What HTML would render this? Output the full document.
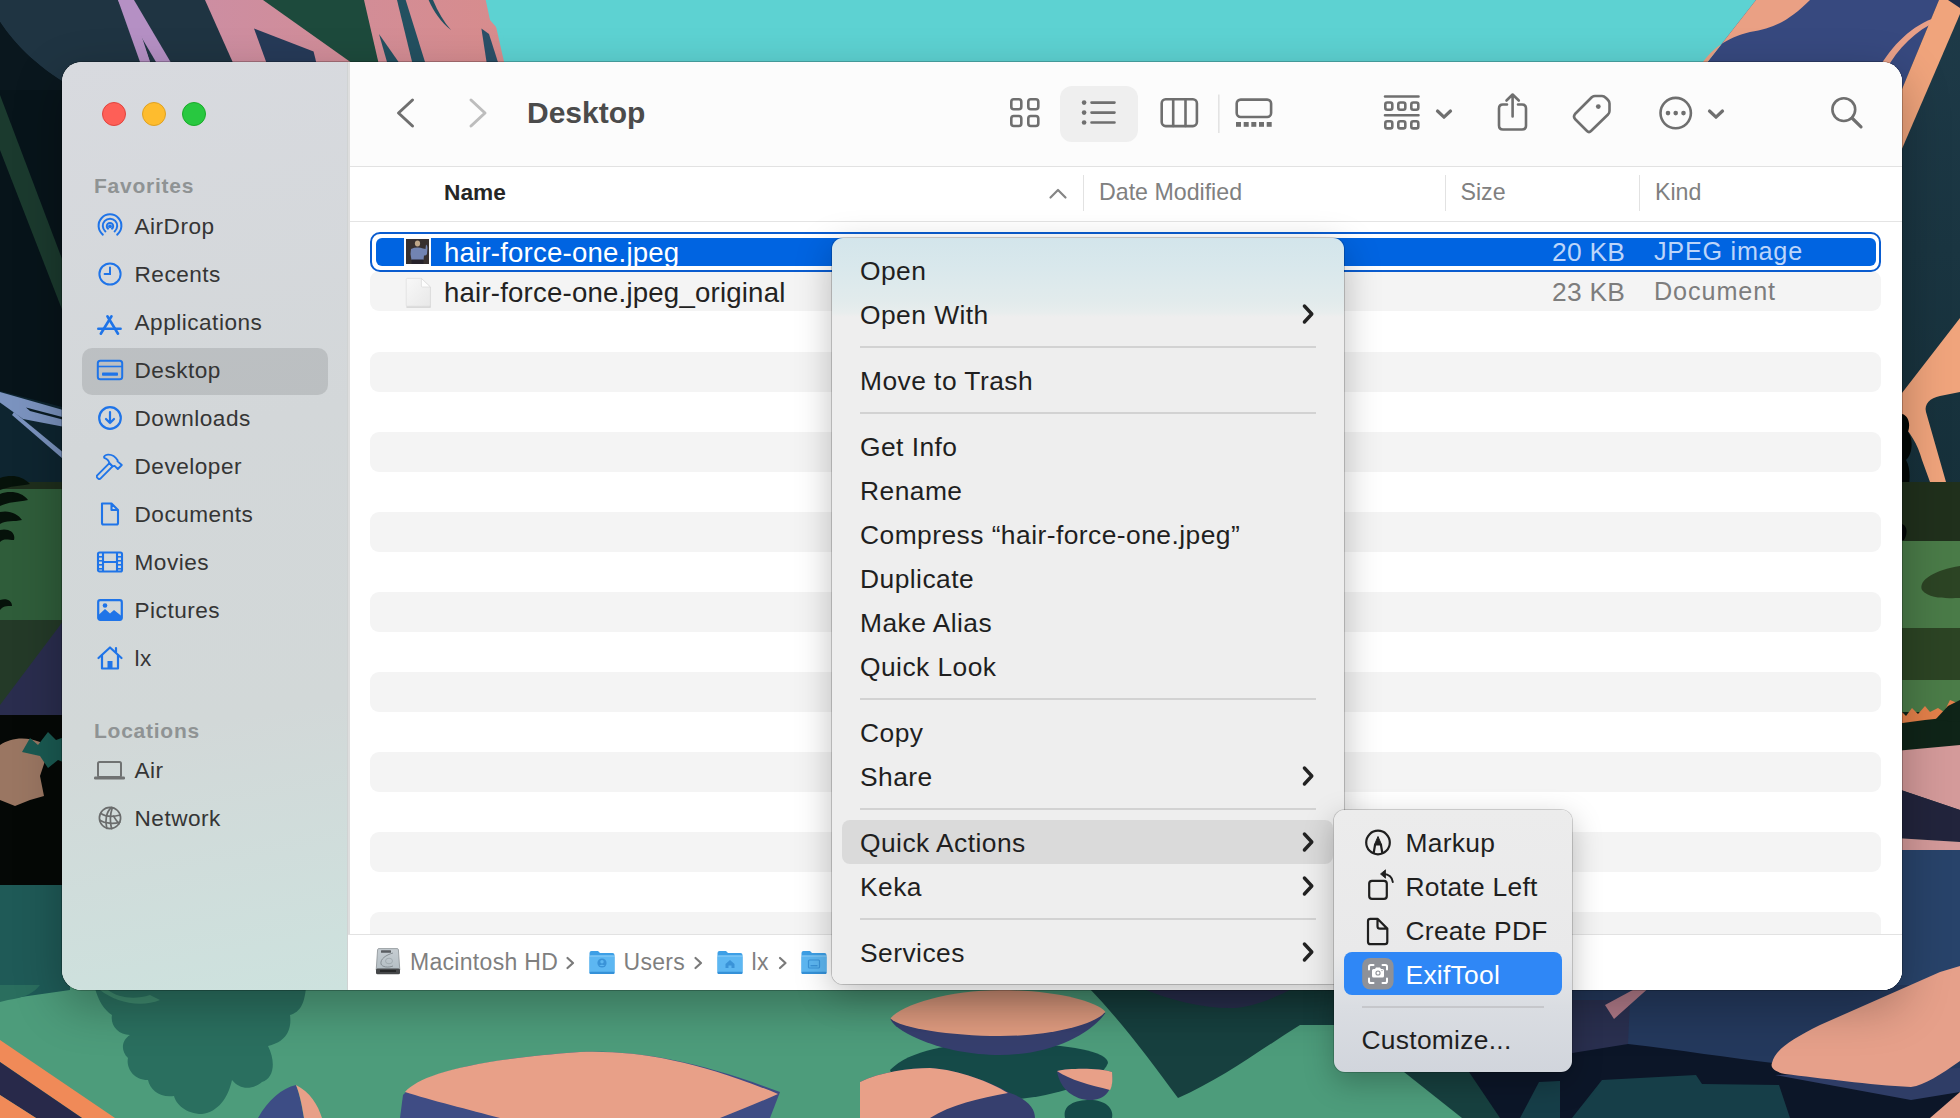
<!DOCTYPE html>
<html><head><meta charset="utf-8">
<style>
*{margin:0;padding:0;box-sizing:border-box}
html,body{width:1960px;height:1118px;overflow:hidden;background:#1b3a40}
body{position:relative;font-family:"Liberation Sans",sans-serif;}
#wall{position:absolute;left:0;top:0;width:1960px;height:1118px}
.abs{position:absolute}
#win{position:absolute;left:62px;top:62px;width:1840px;height:928px;border-radius:20px;overflow:hidden;background:#fff;box-shadow:0 0 0 1px rgba(0,0,0,0.22),0 16px 48px rgba(0,0,0,0.28)}
#side{position:absolute;left:0;top:0;width:286px;height:928px;background:linear-gradient(170deg,#d8dadf 0%,#d3d7d9 40%,#d2d8d8 70%,#cde2de 100%);border-right:1px solid #d0d3d3}
.dot{position:absolute;top:40px;width:24px;height:24px;border-radius:50%}
.sh{position:absolute;left:94px;font-size:21px;font-weight:700;color:#8f9394;white-space:nowrap;letter-spacing:0.75px}
.st{position:absolute;left:134.5px;font-size:22.6px;color:#353535;white-space:nowrap;letter-spacing:0.5px}
.si{position:absolute;left:20px;width:246px;height:47px;border-radius:10px}
.si span{position:absolute;left:53px;top:10px;font-size:22.6px;color:#353535;white-space:nowrap}
.si svg{position:absolute;left:14px;top:11px}
#main{position:absolute;left:286px;top:0;width:1554px;height:928px;background:#fff}
#tb{position:absolute;left:0;top:0;width:1554px;height:105px;background:#fcfcfc;border-bottom:1px solid #e2e2e2}
.ic{position:absolute}
#hdr{position:absolute;left:0;top:105px;width:1554px;height:55px;background:#fff;border-bottom:1px solid #e4e4e4}
.hd{position:absolute;top:15px;font-size:23.2px;color:#808080;white-space:nowrap}
.row{position:absolute;left:22px;width:1511px;height:40px;border-radius:9px}
.gr{background:#f4f4f4}
.fn{position:absolute;font-size:27.6px;white-space:nowrap;letter-spacing:0.2px}
#path{position:absolute;left:0;top:872px;width:1554px;height:56px;background:#fff;border-top:1px solid #e2e2e2}
.pt{position:absolute;font-size:23px;color:#7f7f7f;white-space:nowrap;letter-spacing:0.3px}
#menu{position:absolute;left:832px;top:238px;width:512px;height:746px;border-radius:11px;background:linear-gradient(180deg,#d3e5eb 0%,#d9e8ec 4%,#e2ebec 8.5%,#e8eded 10%,#eeeeee 10.6%,#eeeeee 100%);box-shadow:0 0 0 1px rgba(0,0,0,0.18),0 10px 36px rgba(0,0,0,0.25)}
.mi{position:absolute;left:860px;font-size:26.4px;color:#1f1f1f;white-space:nowrap;letter-spacing:0.45px}
.sep{position:absolute;left:860px;width:456px;height:2px;background:#d2d2d2}
.chev{position:absolute;left:468px}
#sub{position:absolute;left:1334px;top:810px;width:238px;height:262px;border-radius:11px;background:linear-gradient(180deg,#ececec 0%,#e9e9ea 55%,#dadde2 75%,#d1d5dc 100%);box-shadow:0 0 0 1px rgba(0,0,0,0.16),0 10px 30px rgba(0,0,0,0.25)}
.smi{position:absolute;left:72px;font-size:26.4px;color:#1f1f1f;white-space:nowrap}
</style></head><body>
<svg id="wall" viewBox="0 0 1960 1118">
 <rect x="0" y="0" width="1960" height="1118" fill="#1b3a40"/>
 <!-- top strip -->
 <defs>
  <linearGradient id="pk" x1="0" y1="0" x2="1" y2="0"><stop offset="0" stop-color="#c58fb0"/><stop offset="1" stop-color="#d88c8c"/></linearGradient>
 </defs>
 <rect x="0" y="0" width="1960" height="110" fill="#5dd2d2"/>
 <polygon points="0,0 490,0 515,110 0,110" fill="url(#pk)"/>
 <rect x="0" y="0" width="205" height="110" fill="#1f3442"/>
 <polygon points="205,0 254,110 205,110" fill="#1f3442"/>
 <path d="M0,22 C15,45 40,70 80,92 L0,110 Z" fill="#0a171e"/>
 <path d="M0,22 C15,45 40,70 80,92 L85,110 L0,110 Z" fill="#0a171e"/>
 <polygon points="118,0 134,0 180,78 156,78" fill="#b590c4"/>
 <polygon points="140.6,35.8 156,62 150,62" fill="#1f3442"/>
 <polygon points="118,0 130,0 150,62 140,62" fill="#b590c4"/>
 <polygon points="254,28.6 313.6,51.4 320,78 272,78" fill="#263a58"/>
 <polygon points="263,0 364,0 382,78 373,78" fill="#1d4a3c"/>
 <polygon points="379,34 387,62 398.6,62" fill="#235060"/>
 <polygon points="397,0 405.7,0 430,78 416,78" fill="#235060"/>
 <path d="M428.6,0 L433,0 C438,12 444,22 451,30 C441,22 434,12 428.6,0 Z" fill="#235060"/>
 <polygon points="481.4,28.6 489,34 503,78 489,78" fill="#2a5068"/>
 <path d="M485.7,0 L490,20 L503,35 L512,78 L1960,78 L1960,0 Z" fill="#5dd2d2"/>
 <!-- top right -->
 <polygon points="1756,0 1960,0 1960,110 1670,110" fill="#37497f"/>
 <path d="M1756,0 L1810,0 C1790,20 1775,28 1750,32 C1725,38 1712,50 1703,62 L1670,110 Z" fill="#eaa084"/>
 
  <!-- left strip -->
 <rect x="0" y="90" width="70" height="300" fill="#07141a"/>
 <polygon points="0,95 0,150 70,330 70,280" fill="#1b3a2e"/>
 <polygon points="0,385 70,385 70,490 0,490" fill="#0e2530"/><polygon points="0,385 70,385 70,409 0,391" fill="#07141a"/>
 <polygon points="0,392 70,412 70,428 23,419 0,402.6" fill="#7b93bf"/>
 <polygon points="26,407.5 70,419 70,421.5 30,411" fill="#0a1c24"/>
 <polygon points="14,412 70,458 70,465 12,415" fill="#7b93bf"/>
 <rect x="0" y="482" width="70" height="8" fill="#1e2e1c"/>
 <rect x="0" y="489" width="70" height="133" fill="#2f5d3a"/>
 <path d="M0,478 C12,474 22,476 30,484 C20,486 10,486 0,490 Z M0,494 C10,490 22,492 28,500 C18,502 8,502 0,506 Z M0,512 C10,510 18,514 22,520 C14,522 6,520 0,524 Z M0,530 C8,528 16,532 14,540 C8,540 4,538 0,542 Z M0,600 C6,598 12,600 12,606 C6,606 3,606 0,610 Z" fill="#06120a"/>
 <polygon points="0,622 70,622 70,715 0,715" fill="#2a2d4e"/>
 <polygon points="0,620 64,620 0,705" fill="#243a28"/>
 <rect x="0" y="715" width="70" height="172" fill="#050806"/>
 <path d="M0,745 C10,738 25,736 40,742 L46,758 L40,776 L44,796 L30,800 L15,806 L0,800 Z" fill="#9a7662"/>
 <path d="M22,752 L30,738 L38,745 L48,732 L56,740 L70,735 L70,765 L58,760 L48,768 L40,756 Z" fill="#1a5a52"/>
 <rect x="0" y="885" width="70" height="125" fill="#1f5a57"/>
 <!-- right strip -->
 <defs><linearGradient id="dt" x1="0" y1="0" x2="0" y2="1"><stop offset="0" stop-color="#1e3a48"/><stop offset="1" stop-color="#16303a"/></linearGradient></defs>
 <rect x="1895" y="0" width="65" height="500" fill="url(#dt)"/>
 <polygon points="1895,0 1939,0 1895,106" fill="#37497f"/>
 <path d="M1878,70 C1892,45 1912,25 1937,17 L1938,21 C1916,30 1898,48 1886,70 Z" fill="#e8a088"/>
 <polygon points="1939,0 1966,0 1895,165 1895,106" fill="#f0a47c"/>
 <polygon points="1948,0 1960,0 1960,8" fill="#1f2c4a"/>
 <path d="M1960,318 L1895,402 L1895,418 C1910,430 1918,445 1922,460 L1930,482 L1946,482 L1926,412 C1924,404 1930,398 1940,396 L1960,392 Z" fill="#f0a47c"/>
 <path d="M1895,415 C1905,410 1912,420 1908,432 C1914,440 1912,455 1906,460 C1912,470 1910,490 1904,500 C1910,510 1906,520 1895,525 Z" fill="#030806"/>
 <rect x="1895" y="482" width="65" height="60" fill="#20301c"/>
 <path d="M1895,525 C1905,520 1910,530 1904,540 L1895,542 Z" fill="#030806"/>
 <rect x="1895" y="541" width="65" height="87" fill="#4a7b48"/>
 <path d="M1960,566 C1935,570 1918,580 1922,590 C1930,600 1950,598 1960,598 Z" fill="#2c4424"/>
 <rect x="1895" y="628" width="65" height="52" fill="#2c4424"/>
 <rect x="1895" y="680" width="65" height="34" fill="#4b7c48"/>
 <rect x="1895" y="712" width="65" height="40" fill="#0f2418"/>
 <path d="M1895,718 L1902,712 L1906,716 L1912,708 L1918,714 L1925,706 L1930,712 L1938,708 L1944,712 L1950,700 L1960,704 L1960,716 L1944,718 L1925,720 L1895,724 Z" fill="#e4804a"/>
 <path d="M1935,720 L1948,706 L1960,700 L1960,722 Z" fill="#0f2418"/>
 <polygon points="1895,751 1960,745 1960,810 1895,788" fill="#d49a9a"/>
 <polygon points="1895,788 1960,810 1960,842 1895,838" fill="#22243c"/>
 <polygon points="1895,838 1960,842 1960,852 1895,850" fill="#d49a9a"/>
 <rect x="1895" y="850" width="65" height="150" fill="#28436a"/>
 <!-- bottom strip -->
 <rect x="0" y="980" width="1560" height="138" fill="#4d9c7b"/>
 <path d="M0,980 L70,980 L70,990 L0,1000 Z" fill="#1e5b57"/>
 <path d="M0,985 L40,985 C35,992 25,998 8,1000 L0,1002 Z" fill="#2a6e5e"/>
 <path d="M95,988 L306,988 C304,1005 300,1012 290,1015 C292,1030 286,1042 268,1046 C276,1062 274,1078 262,1082 C252,1090 240,1090 232,1080 C228,1098 218,1112 202,1114 C186,1114 176,1104 174,1096 C160,1098 150,1090 148,1080 C132,1080 126,1066 128,1058 C120,1050 122,1040 130,1035 C118,1035 110,1025 112,1015 C104,1010 98,1000 95,988 Z" fill="#2a6f5f"/>
 <path d="M100,990 C115,1002 140,1008 160,1000 L150,995 C135,1000 118,998 108,990 Z" fill="#3f8a6e"/>
 <polygon points="0,1040 0,1062 82,1118 115,1118" fill="#f08a58"/>
 <polygon points="0,1062 0,1095 36,1118 82,1118" fill="#28294a"/>
 <polygon points="0,1095 0,1118 36,1118" fill="#f08a58"/>
 <path d="M258,1118 C268,1100 282,1088 296,1085 C300,1095 302,1108 304,1118 Z" fill="#3d4d85"/>
 <path d="M296,1085 C310,1092 318,1105 322,1118 L304,1118 C302,1105 300,1095 296,1085 Z" fill="#e8a088"/>
 <path d="M400,1118 L403,1095 C420,1075 470,1060 580,1052 C640,1050 700,1062 780,1092 L770,1118 Z" fill="#3f4c84"/>
 <path d="M405,1092 C420,1075 470,1060 580,1052 C640,1050 700,1062 778,1094 C760,1102 740,1110 720,1118 L500,1118 C470,1110 430,1100 405,1092 Z" fill="#e8a088"/>
 <path d="M890,1070 C910,1050 950,1043 1000,1043 C1060,1043 1108,1050 1108,1063 C1100,1085 1040,1100 1000,1100 C940,1100 895,1090 890,1070 Z" fill="#154a48"/>
 <path d="M890.5,1018.5 C892,1030 940,1055 1000,1055 C1050,1055 1090,1035 1105.4,1013 Z" fill="#363f6e"/>
 <path d="M890.5,1018.5 C900,1005 950,990 1000,990 C1050,990 1095,1000 1105.4,1011.8 C1095,1025 1050,1036 1000,1036 C950,1036 900,1028 890.5,1018.5 Z" fill="#e09c80"/>
 <path d="M860,1118 L860,1082 C880,1072 910,1068 930,1068 C960,1070 990,1082 1010,1093 C1030,1100 1035,1110 1035,1118 Z" fill="#363f6e"/>
 <path d="M860,1082 C880,1072 910,1068 930,1068 C960,1070 990,1082 1008,1093 C980,1098 950,1105 930,1118 L860,1118 Z" fill="#e8a088"/>
 <path d="M1057,1071 C1070,1068 1100,1068 1112,1072 C1114,1090 1105,1100 1090,1100 C1075,1100 1060,1090 1057,1071 Z" fill="#363f6e"/>
 <path d="M1057,1071 C1070,1068 1100,1068 1112,1072 C1113,1080 1112,1087 1110,1090 C1090,1085 1070,1080 1057,1071 Z" fill="#e8a088"/>
 <path d="M1065,1118 C1062,1105 1075,1100 1090,1100 C1105,1100 1114,1108 1112,1118 Z" fill="#154a48"/>
 <path d="M1089,988 L1340,988 L1340,1025 L1300,1025 C1260,1050 1220,1080 1178,1098 C1150,1060 1120,1020 1089,988 Z" fill="#17403f"/>
 <path d="M1141,988 L1294,988 C1270,1000 1250,1008 1230,1008 C1200,1008 1170,1000 1141,988 Z" fill="#2a3050"/>
 <path d="M1404,1072 L1580,1072 L1580,1118 L1462,1118 Z" fill="#17403f"/>
 <path d="M1469,1072 L1580,1072 L1580,1118 L1500,1118 Z" fill="#0c1628"/>
 <path d="M1539,1082 L1580,1080 L1580,1118 L1520,1118 Z" fill="#163e48"/>
 <path d="M1560,985 L1960,985 L1960,1118 L1560,1118 Z" fill="#24395d"/>
 <path d="M1560,1000 L1630,1000 L1628,1044 L1560,1060 Z" fill="#2a3050"/>
 <path d="M1560,1055 L1628,1044 C1680,1050 1730,1058 1773,1063 L1960,1075 L1960,1118 L1560,1118 Z" fill="#0c1628"/>
 <path d="M1572,1118 L1602,1080 L1696,1075 L1702,1084 L1779,1085 L1790,1118 Z" fill="#163e48"/>
 <path d="M1605,1005 L1642,985 L1652,985 L1614,1019 Z" fill="#b07a88"/>
 <path d="M1775,1075 L1911,1100 L1960,1092 L1960,1068 Z" fill="#2f3d66"/>
 <path d="M1772,1063 C1775,1050 1790,1040 1820,1025 L1940,972 L1960,966 L1960,1061 C1940,1075 1925,1085 1911,1087 C1870,1085 1820,1078 1785,1074 C1775,1072 1770,1068 1772,1063 Z" fill="#e6a08a"/>
 <path d="M1930,1118 L1960,1092 L1960,1118 Z" fill="#e6a08a"/>
</svg>

<div id="win">
 <div id="side">
  <div class="dot" style="left:40px;background:#fe5f57;border:1px solid #e0443e"></div>
  <div class="dot" style="left:80px;background:#febc2e;border:1px solid #dea123"></div>
  <div class="dot" style="left:120px;background:#28c840;border:1px solid #1aab29"></div>
 </div>
 <div id="main">
  <div id="tb"></div>
  <div id="hdr"></div>
  <div id="path"></div>
 </div>
</div>
<div class="abs" style="left:348px;top:62px;width:1.5px;height:928px;background:#dedede"></div>
<div class="abs" style="left:82px;top:348px;width:246px;height:47px;border-radius:10px;background:rgba(0,0,0,0.11)"></div>
<div class="sh" style="top:174px">Favorites</div>
<div class="sh" style="top:719px">Locations</div>
<div class="abs" style="left:96.0px;top:212px;width:28px;height:28px"><svg width="28" height="28" viewBox="0 0 28 28"><g fill="none" stroke="#1f74e8" stroke-width="2" stroke-linecap="round"><path d="M6.8,22.6 A11.4,11.4 0 1 1 21.2,22.6"/><path d="M9.4,19.4 A7.2,7.2 0 1 1 18.6,19.4"/><path d="M12,16.6 A3.2,3.2 0 1 1 16,16.6"/></g><circle cx="14" cy="14.3" r="1.9" fill="#1f74e8"/></svg></div>
<div class="st" style="top:214px">AirDrop</div>
<div class="abs" style="left:96.0px;top:260px;width:28px;height:28px"><svg width="28" height="28" viewBox="0 0 28 28"><g fill="none" stroke="#1f74e8" stroke-width="2" stroke-linecap="round"><circle cx="14" cy="14" r="10.6"/><path d="M14,7.6 V14 H8.6"/></g></svg></div>
<div class="st" style="top:262px">Recents</div>
<div class="abs" style="left:96.0px;top:308px;width:28px;height:28px"><svg width="28" height="28" viewBox="0 0 28 28"><g fill="none" stroke="#1f74e8" stroke-width="2.6" stroke-linecap="round"><path d="M4.8,25.7 L15.5,8.3"/><path d="M22,25.7 L11.4,8.3"/><path d="M2.3,20.7 H24.6"/></g></svg></div>
<div class="st" style="top:310px">Applications</div>
<div class="abs" style="left:96.0px;top:356px;width:28px;height:28px"><svg width="28" height="28" viewBox="0 0 28 28"><rect x="1.8" y="4.8" width="24.4" height="18.4" rx="2.5" fill="none" stroke="#1f74e8" stroke-width="2"/><path d="M2,10.5 H26" stroke="#1f74e8" stroke-width="1.6"/><rect x="6" y="16.6" width="16" height="3.2" rx="0.8" fill="#1f74e8"/></svg></div>
<div class="st" style="top:358px">Desktop</div>
<div class="abs" style="left:96.0px;top:404px;width:28px;height:28px"><svg width="28" height="28" viewBox="0 0 28 28"><g fill="none" stroke="#1f74e8" stroke-width="2.2" stroke-linecap="round" stroke-linejoin="round"><circle cx="14" cy="14" r="10.8"/><path d="M14,8 V19 M10,15 L14,19 L18,15"/></g></svg></div>
<div class="st" style="top:406px">Downloads</div>
<div class="abs" style="left:96.0px;top:452px;width:28px;height:28px"><svg width="28" height="28" viewBox="0 0 28 28"><g fill="none" stroke="#1f74e8" stroke-width="1.9" stroke-linejoin="round" stroke-linecap="round"><path d="M1.2,23.4 L13.4,11.2 L16.6,14.4 L4.4,26.6 Q3.3,27.6 2.2,26.6 L1.2,25.6 Q0.2,24.5 1.2,23.4 Z"/><path d="M13.4,11.2 C12.8,8.6 10.8,6.6 8.2,5.8 C7.4,4.6 9,2.8 12,2.6 C16,2.4 19.5,4.8 21.6,8.2 L21.6,9.4 L25.8,13 L21.8,17 L18.6,13.9 L16.6,14.4 Z"/></g></svg></div>
<div class="st" style="top:454px">Developer</div>
<div class="abs" style="left:96.0px;top:500px;width:28px;height:28px"><svg width="28" height="28" viewBox="0 0 28 28"><path d="M6,3.5 H15.5 L22,10 V23 A1.5,1.5 0 0 1 20.5,24.5 H7.5 A1.5,1.5 0 0 1 6,23 Z M15.5,3.5 V10 H22" fill="none" stroke="#1f74e8" stroke-width="2.1" stroke-linejoin="round"/></svg></div>
<div class="st" style="top:502px">Documents</div>
<div class="abs" style="left:96.0px;top:548px;width:28px;height:28px"><svg width="28" height="28" viewBox="0 0 28 28"><g fill="none" stroke="#1f74e8" stroke-width="2.1"><rect x="2" y="4.5" width="24" height="19" rx="1.5"/><path d="M7,4.5 V23.5 M21,4.5 V23.5 M7,14 H21"/></g><g fill="#1f74e8"><rect x="2" y="8" width="5" height="1.6"/><rect x="2" y="12" width="5" height="1.6"/><rect x="2" y="16" width="5" height="1.6"/><rect x="2" y="20" width="5" height="1.6"/><rect x="21" y="8" width="5" height="1.6"/><rect x="21" y="12" width="5" height="1.6"/><rect x="21" y="16" width="5" height="1.6"/><rect x="21" y="20" width="5" height="1.6"/></g></svg></div>
<div class="st" style="top:550px">Movies</div>
<div class="abs" style="left:96.0px;top:596px;width:28px;height:28px"><svg width="28" height="28" viewBox="0 0 28 28"><rect x="2.2" y="4.2" width="23.6" height="19.6" rx="2" fill="none" stroke="#1f74e8" stroke-width="2.2"/><path d="M2.5,23.5 V19 L9,13 L14,17.5 L18,14 L25.5,20 V23.5 Z" fill="#1f74e8"/><circle cx="9" cy="9.5" r="2.3" fill="#1f74e8"/></svg></div>
<div class="st" style="top:598px">Pictures</div>
<div class="abs" style="left:96.0px;top:644px;width:28px;height:28px"><svg width="28" height="28" viewBox="0 0 28 28"><g fill="none" stroke="#1f74e8" stroke-width="2.2" stroke-linejoin="round" stroke-linecap="round"><path d="M2.5,14 L14,3.5 L25.5,14"/><path d="M6,11 V24.5 H22 V11"/><path d="M20,4 V8"/></g><rect x="11.5" y="17" width="5" height="7.5" fill="#1f74e8"/></svg></div>
<div class="st" style="top:646px">lx</div>
<div class="abs" style="left:93.0px;top:756px;width:34px;height:28px"><svg width="34" height="28" viewBox="0 0 34 28"><rect x="5" y="6" width="23" height="15" rx="1.5" fill="none" stroke="#707272" stroke-width="2"/><rect x="1" y="20.5" width="31" height="3" rx="1.2" fill="#707272"/></svg></div>
<div class="st" style="top:758px">Air</div>
<div class="abs" style="left:96.0px;top:804px;width:28px;height:28px"><svg width="28" height="28" viewBox="0 0 28 28"><g fill="none" stroke="#6a6c6c" stroke-width="1.7" stroke-linecap="round"><circle cx="14" cy="14" r="10.6"/><path d="M15.5,3.5 C10.5,7.5 8.6,16 10.8,24.4"/><path d="M16.3,3.7 C14.2,10 13.8,18 15.6,24.6"/><path d="M4.6,9.4 C9.5,12.6 17.5,13 24.2,11"/><path d="M3.8,16.2 C9,19.5 17.5,20.2 23.8,18.2"/><path d="M17.5,12.2 C19,14.8 20.5,17 23.2,19.6"/></g></svg></div>
<div class="st" style="top:806px">Network</div>

<svg class="abs" style="left:348px;top:62px" width="1554" height="104" viewBox="348 62 1554 104">
 <g fill="none" stroke="#6f6f6f" stroke-width="3" stroke-linecap="round" stroke-linejoin="round">
  <path d="M412.5,100 L398.5,113 L412.5,126"/>
 </g>
 <g fill="none" stroke="#bdbdbd" stroke-width="3" stroke-linecap="round" stroke-linejoin="round">
  <path d="M471,100 L485,113 L471,126"/>
 </g>
 <rect x="1060" y="86" width="78" height="56" rx="12" fill="#efefef"/>
 <g fill="none" stroke="#6f6f6f" stroke-width="2.6" stroke-linecap="round" stroke-linejoin="round">
  <rect x="1011.3" y="99.3" width="10" height="10" rx="2.5"/>
  <rect x="1028.3" y="99.3" width="10" height="10" rx="2.5"/>
  <rect x="1011.3" y="116" width="10" height="10" rx="2.5"/>
  <rect x="1028.3" y="116" width="10" height="10" rx="2.5"/>
  <path d="M1091.5,102.6 H1114.5 M1091.5,112.6 H1114.5 M1091.5,122.5 H1114.5"/>
  <rect x="1161.7" y="99.3" width="35.2" height="26.8" rx="4"/>
  <path d="M1173.2,99.3 V126 M1185.5,99.3 V126"/>
  <rect x="1236.7" y="99.6" width="34.4" height="17.4" rx="4"/>
  <rect x="1385.3" y="102.5" width="7" height="7.2" rx="2"/>
  <rect x="1398.3" y="102.5" width="7" height="7.2" rx="2"/>
  <rect x="1411.3" y="102.5" width="7" height="7.2" rx="2"/>
  <rect x="1385.3" y="121.2" width="7" height="7.2" rx="2"/>
  <rect x="1398.3" y="121.2" width="7" height="7.2" rx="2"/>
  <rect x="1411.3" y="121.2" width="7" height="7.2" rx="2"/>
  <path d="M1385,96.5 H1418.5 M1385,115.3 H1418.5"/>
  <path d="M1507,104.5 H1503 Q1499,104.5 1499,108.5 V125.5 Q1499,129.5 1503,129.5 H1522 Q1526,129.5 1526,125.5 V108.5 Q1526,104.5 1522,104.5 H1518"/>
  <path d="M1512.6,116.5 V94.5 M1506.5,100.5 L1512.6,94.5 L1518.8,100.5"/>
  <path d="M1575,114 L1592,97 Q1593.5,96 1595,96 H1602 Q1604,96 1606,98 L1608,100 Q1609.5,101.5 1609.5,103.5 V111 Q1609.5,113 1608,114.5 L1591,131 Q1589,133 1587,131 L1575,119 Q1573,116.5 1575,114 Z"/>
  <circle cx="1675.7" cy="113.1" r="15.2"/>
  <circle cx="1843.8" cy="109.6" r="11.4"/>
 </g>
 <g fill="none" stroke="#6f6f6f" stroke-width="3.2" stroke-linecap="round" stroke-linejoin="round">
  <path d="M1437.5,111 L1444,117.2 L1450.5,111"/>
  <path d="M1709.5,111 L1716,117.2 L1722.5,111"/>
  <path d="M1852,118 L1861,126.8"/>
 </g>
 <g fill="#6f6f6f">
  <circle cx="1084.1" cy="102.6" r="2.3"/><circle cx="1084.1" cy="112.6" r="2.3"/><circle cx="1084.1" cy="122.5" r="2.3"/>
  <rect x="1236" y="122" width="5" height="4.8"/><rect x="1243.7" y="122" width="5" height="4.8"/><rect x="1251.3" y="122" width="5" height="4.8"/><rect x="1259" y="122" width="5" height="4.8"/><rect x="1266.7" y="122" width="5" height="4.8"/>
  <circle cx="1598.3" cy="106.6" r="2.4"/>
  <circle cx="1668" cy="113.1" r="2.3"/><circle cx="1675.7" cy="113.1" r="2.3"/><circle cx="1683.5" cy="113.1" r="2.3"/>
 </g>
 <rect x="1218" y="94.5" width="1.6" height="38.5" fill="#e3e3e3"/>
</svg>
<div class="abs" style="left:527px;top:96.2px;font-size:30px;font-weight:700;color:#4b4b4b;white-space:nowrap">Desktop</div>
<div class="abs" style="left:444px;top:179.4px;font-size:22.7px;font-weight:700;color:#262626;white-space:nowrap">Name</div>
<div class="hd" style="left:1099px;top:179px">Date Modified</div>
<div class="hd" style="left:1460.5px;top:179px">Size</div>
<div class="hd" style="left:1655px;top:179px">Kind</div>
<div class="abs" style="left:1082.5px;top:174.5px;width:1.6px;height:36.5px;background:#e2e2e2"></div>
<div class="abs" style="left:1444.5px;top:174.5px;width:1.6px;height:36.5px;background:#e2e2e2"></div>
<div class="abs" style="left:1638.5px;top:174.5px;width:1.6px;height:36.5px;background:#e2e2e2"></div>
<svg class="abs" style="left:1045px;top:184px" width="26" height="20" viewBox="0 0 26 20"><path d="M5.5,13.5 L13,6 L20.5,13.5" fill="none" stroke="#858585" stroke-width="2.2" stroke-linecap="round" stroke-linejoin="round"/></svg>
<div class="abs gr" style="left:370px;top:352px;width:1511px;height:40px;border-radius:9px"></div>
<div class="abs gr" style="left:370px;top:432px;width:1511px;height:40px;border-radius:9px"></div>
<div class="abs gr" style="left:370px;top:512px;width:1511px;height:40px;border-radius:9px"></div>
<div class="abs gr" style="left:370px;top:592px;width:1511px;height:40px;border-radius:9px"></div>
<div class="abs gr" style="left:370px;top:672px;width:1511px;height:40px;border-radius:9px"></div>
<div class="abs gr" style="left:370px;top:752px;width:1511px;height:40px;border-radius:9px"></div>
<div class="abs gr" style="left:370px;top:832px;width:1511px;height:40px;border-radius:9px"></div>
<div class="abs gr" style="left:370px;top:912px;width:1511px;height:40px;border-radius:9px"></div>
<div class="abs" style="left:348px;top:934px;width:1554px;height:56px;background:#fff;border-top:1px solid #e2e2e2;border-bottom-right-radius:20px"></div>
<div class="abs gr" style="left:370px;top:271px;width:1511px;height:40px;border-radius:9px"></div>
<div class="abs" style="left:370px;top:232px;width:1511px;height:39.5px;border-radius:10px;border:2.6px solid #0a5ccf"></div>
<div class="abs" style="left:375.8px;top:238px;width:1500.4px;height:28px;border-radius:6px;background:#0064e1"></div>
<div class="abs" style="left:404px;top:238px;width:27px;height:28px;background:#fdfdfd"></div>
<svg class="abs" style="left:406px;top:239px" width="23" height="25" viewBox="0 0 23 25"><rect width="23" height="25" fill="#37302f"/><ellipse cx="11.5" cy="4.6" rx="2.6" ry="3" fill="#bfa88a"/><path d="M5,10 Q11,7.5 17,9.5 L19.5,10 L20,5.5 Q21.5,6 21.5,9 L21,15 Q20,17 18,16.5 L17.5,21 H5.5 L4.5,15 Z" fill="#7284b2"/><rect x="5.5" y="20.5" width="12" height="4.5" fill="#26222a"/></svg>
<div class="fn" style="left:444px;top:236.7px;color:#ffffff">hair-force-one.jpeg</div>
<div class="fn" style="left:1400px;width:225px;text-align:right;top:236.7px;color:#bcd5fa;font-size:26.4px">20 KB</div>
<div class="fn" style="left:1654px;top:237.2px;color:#bcd5fa;font-size:25.2px;letter-spacing:0.75px">JPEG image</div>
<svg class="abs" style="left:404px;top:277px" width="30" height="32" viewBox="0 0 30 32"><defs><linearGradient id="pg" x1="0" y1="0" x2="1" y2="1"><stop offset="0" stop-color="#f8f8f8"/><stop offset="1" stop-color="#e8e8e8"/></linearGradient></defs><path d="M2.4,30 H26 V10" fill="none" stroke="#d0d0d0" stroke-width="1.4"/><path d="M2.2,2.4 Q2.2,1.4 3.2,1.4 H17.4 L26.4,10 V28.2 Q26.4,29.2 25.4,29.2 H3.2 Q2.2,29.2 2.2,28.2 Z" fill="url(#pg)" stroke="#dcdcdc" stroke-width="0.7"/><path d="M17.4,1.4 V9 Q17.4,10 18.4,10 H26.4 Z" fill="#fdfdfd" stroke="#d8d8d8" stroke-width="0.7"/></svg>
<div class="fn" style="left:444px;top:276.5px;color:#222222">hair-force-one.jpeg_original</div>
<div class="fn" style="left:1400px;width:225px;text-align:right;top:276.5px;color:#7d7d7d;font-size:26.4px">23 KB</div>
<div class="fn" style="left:1654px;top:277px;color:#7d7d7d;font-size:25.2px;letter-spacing:0.9px">Document</div>
<svg class="abs" style="left:374px;top:946px" width="28" height="30" viewBox="0 0 28 30"><defs><linearGradient id="hd" x1="0" y1="0" x2="0" y2="1"><stop offset="0" stop-color="#c6cdd2"/><stop offset="1" stop-color="#b4bec4"/></linearGradient></defs><path d="M3.6,3.6 Q3.8,2.6 5,2.6 H23 Q24.2,2.6 24.4,3.6 L25.8,24 H2.2 Z" fill="url(#hd)" stroke="#8a9094" stroke-width="0.8"/><rect x="2" y="22.5" width="24" height="5.8" rx="1.5" fill="#454749"/><rect x="6" y="24.2" width="16" height="1.6" fill="#202122"/><rect x="7" y="4.2" width="10" height="2.6" rx="0.5" fill="#5a5e62"/><path d="M19,7 C12,9 6,13 7,18 C8,21 14,22 19,20" fill="none" stroke="#7a8286" stroke-width="0.8"/><ellipse cx="15" cy="15" rx="3.5" ry="2.8" fill="none" stroke="#9aa4aa" stroke-width="0.8"/></svg>
<div class="pt" style="top:949px;left:410px">Macintosh HD</div>
<div class="pt" style="top:949px;left:623.5px">Users</div>
<div class="pt" style="top:949px;left:751.5px">lx</div>
<svg class="abs" style="left:560px;top:950px" width="240" height="26" viewBox="560 950 240 26"><g fill="none" stroke="#7a7a7a" stroke-width="2.2" stroke-linecap="round" stroke-linejoin="round"><path d="M567.5,958 L573,963 L567.5,968"/><path d="M695.5,958 L701,963 L695.5,968"/><path d="M780,958 L785.5,963 L780,968"/></g></svg>
<svg class="abs" style="left:589px;top:950px" width="26" height="25" viewBox="0 0 26 25"><path d="M0.5,3 Q0.5,1 2.5,1 H9 L11,3 H23.5 Q25.5,3 25.5,5 V22 Q25.5,24 23.5,24 H2.5 Q0.5,24 0.5,22 Z" fill="#3d9fe6"/><rect x="0.5" y="5.5" width="25" height="18.5" rx="2" fill="#5db7f2"/><rect x="0.5" y="5.5" width="25" height="1" fill="#8fd0f8"/><rect x="0.5" y="21.8" width="25" height="2.2" rx="1" fill="#3591d8"/><circle cx="13" cy="13" r="4.6" fill="#3a93d8"/><circle cx="13" cy="11.8" r="1.7" fill="#5db7f2"/><path d="M10.2,16 Q13,13.5 15.8,16" fill="#5db7f2"/></svg>
<svg class="abs" style="left:717px;top:950px" width="26" height="25" viewBox="0 0 26 25"><path d="M0.5,3 Q0.5,1 2.5,1 H9 L11,3 H23.5 Q25.5,3 25.5,5 V22 Q25.5,24 23.5,24 H2.5 Q0.5,24 0.5,22 Z" fill="#3d9fe6"/><rect x="0.5" y="5.5" width="25" height="18.5" rx="2" fill="#5db7f2"/><rect x="0.5" y="5.5" width="25" height="1" fill="#8fd0f8"/><rect x="0.5" y="21.8" width="25" height="2.2" rx="1" fill="#3591d8"/><path d="M8.5,14 L13,10 L17.5,14 V18 H14.5 V15.5 H11.5 V18 H8.5 Z" fill="#3a93d8"/></svg>
<svg class="abs" style="left:801px;top:950px" width="26" height="25" viewBox="0 0 26 25"><path d="M0.5,3 Q0.5,1 2.5,1 H9 L11,3 H23.5 Q25.5,3 25.5,5 V22 Q25.5,24 23.5,24 H2.5 Q0.5,24 0.5,22 Z" fill="#3d9fe6"/><rect x="0.5" y="5.5" width="25" height="18.5" rx="2" fill="#5db7f2"/><rect x="0.5" y="5.5" width="25" height="1" fill="#8fd0f8"/><rect x="0.5" y="21.8" width="25" height="2.2" rx="1" fill="#3591d8"/><rect x="7.5" y="10" width="11" height="8" rx="1" fill="none" stroke="#3a93d8" stroke-width="1.2"/><rect x="9.5" y="15" width="7" height="1.4" fill="#3a93d8"/></svg>
<div id="menu"></div>
<div class="abs" style="left:842.3px;top:820.4px;width:491px;height:43.6px;border-radius:8px;background:#dadada"></div>
<div class="mi" style="top:255.8px">Open</div>
<div class="mi" style="top:299.8px">Open With</div>
<svg class="abs" style="left:1296px;top:301px" width="24" height="26" viewBox="0 0 24 26"><path d="M8.4,5 L15.8,13 L8.4,21" fill="none" stroke="#222222" stroke-width="3.4" stroke-linecap="round" stroke-linejoin="round"/></svg>
<div class="mi" style="top:365.8px">Move to Trash</div>
<div class="mi" style="top:431.8px">Get Info</div>
<div class="mi" style="top:475.8px">Rename</div>
<div class="mi" style="top:519.8px">Compress “hair-force-one.jpeg”</div>
<div class="mi" style="top:563.8px">Duplicate</div>
<div class="mi" style="top:607.8px">Make Alias</div>
<div class="mi" style="top:651.8px">Quick Look</div>
<div class="mi" style="top:717.8px">Copy</div>
<div class="mi" style="top:761.8px">Share</div>
<svg class="abs" style="left:1296px;top:763px" width="24" height="26" viewBox="0 0 24 26"><path d="M8.4,5 L15.8,13 L8.4,21" fill="none" stroke="#222222" stroke-width="3.4" stroke-linecap="round" stroke-linejoin="round"/></svg>
<div class="mi" style="top:827.8px">Quick Actions</div>
<svg class="abs" style="left:1296px;top:829px" width="24" height="26" viewBox="0 0 24 26"><path d="M8.4,5 L15.8,13 L8.4,21" fill="none" stroke="#222222" stroke-width="3.4" stroke-linecap="round" stroke-linejoin="round"/></svg>
<div class="mi" style="top:871.8px">Keka</div>
<svg class="abs" style="left:1296px;top:873px" width="24" height="26" viewBox="0 0 24 26"><path d="M8.4,5 L15.8,13 L8.4,21" fill="none" stroke="#222222" stroke-width="3.4" stroke-linecap="round" stroke-linejoin="round"/></svg>
<div class="mi" style="top:937.8px">Services</div>
<svg class="abs" style="left:1296px;top:939px" width="24" height="26" viewBox="0 0 24 26"><path d="M8.4,5 L15.8,13 L8.4,21" fill="none" stroke="#222222" stroke-width="3.4" stroke-linecap="round" stroke-linejoin="round"/></svg>
<div class="sep" style="top:346px"></div>
<div class="sep" style="top:412px"></div>
<div class="sep" style="top:698px"></div>
<div class="sep" style="top:808px"></div>
<div class="sep" style="top:918px"></div>

<div id="sub"></div>
<div class="abs" style="left:1344px;top:952px;width:218px;height:43.3px;border-radius:8px;background:#2f87f6"></div>
<svg class="abs" style="left:1364px;top:829px" width="28" height="28" viewBox="0 0 28 28"><circle cx="14" cy="13.5" r="11.8" fill="none" stroke="#1f1f1f" stroke-width="2.2"/><path d="M11.2,15 L9.5,25 M16.8,15 L18.5,25" fill="none" stroke="#1f1f1f" stroke-width="2.2"/><path d="M10.3,16 L14,7.5 L17.7,16 Z" fill="#1f1f1f" stroke="#1f1f1f" stroke-width="1" stroke-linejoin="round"/></svg>
<svg class="abs" style="left:1364px;top:868px" width="32" height="34" viewBox="0 0 32 34"><rect x="5.2" y="12.8" width="17.6" height="18" rx="2.8" fill="none" stroke="#1f1f1f" stroke-width="2.2"/><path d="M20,6 C24.5,6 28.5,9.5 28.8,14" fill="none" stroke="#1f1f1f" stroke-width="2" stroke-linecap="round"/><path d="M16.5,6 L21.5,1.8 L21.5,10.2 Z" fill="#1f1f1f" stroke="#1f1f1f" stroke-width="0.8" stroke-linejoin="round"/></svg>
<svg class="abs" style="left:1364px;top:915px" width="28" height="32" viewBox="0 0 28 32"><path d="M6,3.8 H13.5 L23.3,13.6 V26.8 Q23.3,29.2 20.9,29.2 H6.4 Q4,29.2 4,26.8 V6.2 Q4,3.8 6.4,3.8 Z M13.5,3.8 V11.2 Q13.5,13.6 15.9,13.6 H23.3" fill="none" stroke="#1f1f1f" stroke-width="2.2" stroke-linejoin="round"/></svg>
<svg class="abs" style="left:1362px;top:958px" width="32" height="32" viewBox="0 0 32 32"><rect x="0.2" y="0" width="31.4" height="31.6" rx="8" fill="#8e9198"/><g fill="none" stroke="#ffffff" stroke-width="2" stroke-linecap="round"><path d="M7,11.5 V8.8 Q7,7 8.8,7 H11.5 M20.5,7 H23.2 Q25,7 25,8.8 V11.5 M25,20.5 V23.2 Q25,25 23.2,25 H20.5 M11.5,25 H8.8 Q7,25 7,23.2 V20.5"/></g><path d="M10,12.5 Q10,11 11.5,11 H13 L14,9.6 H18 L19,11 H20.5 Q22,11 22,12.5 V18 Q22,19.5 20.5,19.5 H11.5 Q10,19.5 10,18 Z" fill="#ffffff"/><circle cx="16" cy="15" r="2.6" fill="#8e9198"/><circle cx="16" cy="15" r="1.5" fill="#ffffff"/><circle cx="20" cy="12.6" r="0.7" fill="#8e9198"/></svg>
<div class="mi" style="left:1405.5px;top:828.0px;color:#1f1f1f;letter-spacing:0.28px">Markup</div>
<div class="mi" style="left:1405.5px;top:872.0px;color:#1f1f1f;letter-spacing:0.28px">Rotate Left</div>
<div class="mi" style="left:1405.5px;top:916.0px;color:#1f1f1f;letter-spacing:0.28px">Create PDF</div>
<div class="mi" style="left:1405.5px;top:960.0px;color:#ffffff;letter-spacing:0.28px">ExifTool</div>
<div class="mi" style="left:1361.5px;top:1025.0px;color:#1f1f1f;letter-spacing:0.28px">Customize...</div>
<div class="abs" style="left:1362px;top:1006px;width:182px;height:2px;background:#c6c7cb"></div>

</body></html>
